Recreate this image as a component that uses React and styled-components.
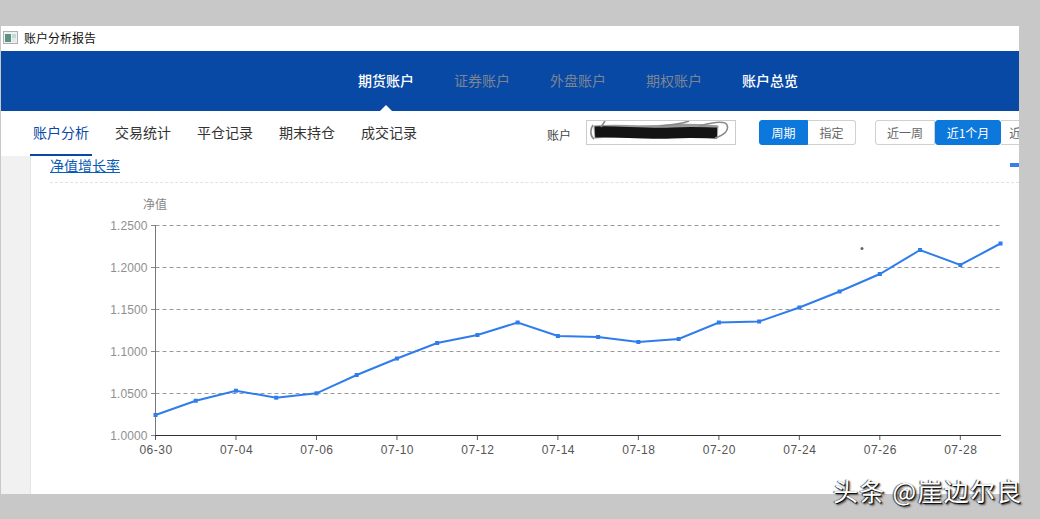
import React from 'react';
import styled, { createGlobalStyle } from 'styled-components';

const Global = createGlobalStyle`
  html, body { margin: 0; padding: 0; background: #c8c8c8; }
  body { font-family: "Noto Sans CJK SC", "Liberation Sans", sans-serif; overflow: hidden; }
`;

const Stage = styled.div`
  position: relative;
  width: 1040px;
  height: 519px;
  background: #c8c8c8;
  padding: 26px 21px 25px 1px;
  box-sizing: border-box;
  overflow: hidden;
`;
const Win = styled.div`
  width: 1018px;
  height: 468px;
  background: #fff;
  display: flex;
  flex-direction: column;
  overflow: hidden;
`;
const TitleBar = styled.div`
  height: 25px;
  flex: none;
  display: flex;
  align-items: center;
  gap: 6px;
  padding: 0 0 2px 2px;
  box-sizing: border-box;
  font-size: 12px;
  color: #111;
`;
const Nav = styled.nav`
  height: 60px;
  flex: none;
  background: #0849a6;
  display: flex;
  align-items: flex-start;
  gap: 40px;
  padding: 0 0 0 357px;
  box-sizing: border-box;
`;
const NavItem = styled.div`
  position: relative;
  font-size: 14px;
  line-height: 58px;
  height: 60px;
  font-weight: ${p => (p.$on ? 500 : 400)};
  color: ${p => (p.$on ? '#fff' : '#7d8591')};
  ${p => p.$mark && `
    &::after {
      content: '';
      position: absolute;
      left: 22px;
      bottom: 0;
      border-left: 6px solid transparent;
      border-right: 6px solid transparent;
      border-bottom: 6px solid #fff;
    }
  `}
`;
const TabRow = styled.div`
  height: 45px;
  flex: none;
  display: flex;
  align-items: center;
  padding-left: 29px;
  box-sizing: border-box;
`;
const Tabs = styled.div`
  display: flex;
  height: 45px;
  width: 517px;
  flex: none;
`;
const Tab = styled.div`
  box-sizing: border-box;
  height: 45px;
  padding: 0 3px;
  margin-right: 20px;
  line-height: 43px;
  font-size: 14px;
  color: ${p => (p.$on ? '#0849a6' : '#333')};
  border-bottom: 2px solid ${p => (p.$on ? '#0849a6' : 'transparent')};
`;
const FieldLabel = styled.span`
  font-size: 12px;
  color: #444;
  flex: none;
  white-space: nowrap;
  margin-right: 15px;
  position: relative;
  top: 1px;
`;
const AccountBox = styled.div`
  width: 150px;
  height: 25px;
  flex: none;
  box-sizing: border-box;
  border: 1px solid #ccc;
  margin: 0 23px 0 0;
  position: relative;
  top: -1px;
  overflow: hidden;
`;
const Group = styled.div`
  display: flex;
  flex: none;
  height: 25px;
  box-sizing: border-box;
  position: relative;
  top: -1px;
  margin-right: ${p => p.$gap || 0}px;
`;
const Seg = styled.div`
  width: ${p => p.$w}px;
  height: 25px;
  box-sizing: border-box;
  flex: none;
  font-size: 12px;
  line-height: 23px;
  text-align: center;
  color: ${p => (p.$on ? '#fff' : '#666')};
  background: ${p => (p.$on ? '#0c78dc' : '#fff')};
  border: 1px solid ${p => (p.$on ? '#0c78dc' : '#d0d0d0')};
  ${p => !p.$first && !p.$on && 'border-left: none;'}
  border-radius: ${p => p.$r || '0'};
  white-space: nowrap;
  overflow: hidden;
`;
const Body = styled.div`
  flex: 1;
  display: flex;
  min-height: 0;
`;
const Rail = styled.div`
  width: 29px;
  flex: none;
  background: #f1f1f1;
  border-right: 1px solid #e4e4e4;
`;
const Main = styled.div`
  flex: 1;
  min-width: 0;
  display: flex;
  flex-direction: column;
`;
const SectionHead = styled.div`
  position: relative;
  margin-left: 19px;
  height: 27px;
  box-sizing: border-box;
  border-bottom: 1px dashed #e2e2e2;
`;
const SectionTitle = styled.a`
  font-size: 14px;
  line-height: 18px;
  color: #0b5cb4;
  text-decoration: underline;
  display: block;
  width: 70px;
  white-space: nowrap;
`;
const LegendMark = styled.span`
  position: absolute;
  right: 0;
  top: 7px;
  width: 9px;
  height: 4px;
  background: #3a7fe8;
`;
const ChartSvg = styled.svg`
  display: block;
  width: 988px;
  height: 311px;
  flex: none;
`;
const Watermark = styled.div`
  position: absolute;
  left: 833px;
  top: 473px;
  font-size: 25px;
  line-height: 34px;
  letter-spacing: 1.3px;
  color: #fff;
  text-shadow: 1px 1px 1px #000, -1px 0 1px rgba(0,0,0,.7), 2px 2px 2px rgba(0,0,0,.6);
  white-space: nowrap;
`;

const AppIcon = () => (
  <svg width="15" height="13" viewBox="0 0 15 13">
    <rect x="0.5" y="0.5" width="14" height="12" fill="#eef1f1" stroke="#aab0b0" />
    <rect x="2" y="3" width="6" height="8" fill="#5d9184" />
    <rect x="9" y="3" width="4" height="4" fill="#c4dcd0" />
    <rect x="9" y="7" width="4" height="4" fill="#e2e9e6" />
  </svg>
);

const Scribble = () => (
  <svg width="148" height="23" viewBox="0 0 148 23">
    <path d="M7 11 C30 9 55 12 80 10 C100 8 118 10 131 11" stroke="#9a9a9a" strokeWidth="13" fill="none" />
    <path d="M8 11 C30 10 55 13 85 12 C105 11 120 12 130 12" stroke="#141414" strokeWidth="11" fill="none" />
    <path d="M6 4 C3 8 3 15 7 18 M18 0 L14 6 M73 5 C85 4 95 3 102 0 M112 5 C122 2 138 -1 140 4 C142 9 138 14 128 17" stroke="#8a8a8a" strokeWidth="1.6" fill="none" />
  </svg>
);

const ys = [415, 400.7, 390.7, 397.7, 393.3, 375, 358.5, 343, 335, 322.5, 336, 337, 342, 339, 322.5, 321.5, 307.5, 291.5, 274, 250, 265, 243.5];
const X0 = 155.5;
const STEP = 40.24;
const pts = ys.map((y, i) => [X0 + i * STEP, y]);
const yTicks = [['1.2500', 225.5], ['1.2000', 267.5], ['1.1500', 309.5], ['1.1000', 351.5], ['1.0500', 393.5], ['1.0000', 435.5]];
const xLabels = ['06-30', '07-04', '07-06', '07-10', '07-12', '07-14', '07-18', '07-20', '07-24', '07-26', '07-28'];

const Chart = () => (
  <ChartSvg viewBox="31 183 988 311" fontFamily='"Liberation Sans", sans-serif' fontSize="12">
    <text x="143" y="208.5" fontSize="12" fill="#888" fontFamily='"Noto Sans CJK SC", sans-serif'>净值</text>
    {yTicks.map(([t, y]) => (
      <g key={t}>
        {y !== 435.5 && <line x1="155.5" x2="1001" y1={y} y2={y} stroke="#999" strokeDasharray="4 3" />}
        <line x1="151" x2="155.5" y1={y} y2={y} stroke="#888" />
        <text x="147.5" y={y + 4.5} textAnchor="end" fill="#8f8f8f" letterSpacing="0.1">{t}</text>
      </g>
    ))}
    <line x1="155.5" x2="155.5" y1="225" y2="436" stroke="#777" />
    <line x1="155" x2="1001" y1="435.5" y2="435.5" stroke="#333" />
    {xLabels.map((t, i) => {
      const x = X0 + i * 2 * STEP;
      return (
        <g key={t}>
          <line x1={x} x2={x} y1="436" y2="440" stroke="#555" />
          <text x={x + 0.5} y="454" textAnchor="middle" fill="#555" letterSpacing="0.5">{t}</text>
        </g>
      );
    })}
    <polyline points={pts.map(p => p.join(',')).join(' ')} fill="none" stroke="#2f7ded" strokeWidth="2" />
    {pts.map(([x, y]) => (
      <rect key={x} x={x - 2} y={y - 2} width="4" height="4" fill="#2f7ded" />
    ))}
    <circle cx="862" cy="248.5" r="1.5" fill="#666" />
  </ChartSvg>
);

export default function App() {
  return (
    <>
      <Global />
      <Stage>
        <Win>
          <TitleBar><AppIcon />账户分析报告</TitleBar>
          <Nav>
            <NavItem $on $mark>期货账户</NavItem>
            <NavItem>证券账户</NavItem>
            <NavItem>外盘账户</NavItem>
            <NavItem>期权账户</NavItem>
            <NavItem $on>账户总览</NavItem>
          </Nav>
          <TabRow>
            <Tabs>
              <Tab $on>账户分析</Tab>
              <Tab>交易统计</Tab>
              <Tab>平仓记录</Tab>
              <Tab>期末持仓</Tab>
              <Tab>成交记录</Tab>
            </Tabs>
            <FieldLabel>账户</FieldLabel>
            <AccountBox><Scribble /></AccountBox>
            <Group $gap={19}>
              <Seg $w={49} $on $first $r="3px 0 0 3px">周期</Seg>
              <Seg $w={48} $r="0 3px 3px 0">指定</Seg>
            </Group>
            <Group>
              <Seg $w={60} $first $r="3px 0 0 3px">近一周</Seg>
              <Seg $w={66} $on $r="3px">近1个月</Seg>
              <Seg $w={60}>近3个月</Seg>
            </Group>
          </TabRow>
          <Body>
            <Rail />
            <Main>
              <SectionHead>
                <SectionTitle>净值增长率</SectionTitle>
                <LegendMark />
              </SectionHead>
              <Chart />
            </Main>
          </Body>
        </Win>
        <Watermark>头条 @崖边尔良</Watermark>
      </Stage>
    </>
  );
}
